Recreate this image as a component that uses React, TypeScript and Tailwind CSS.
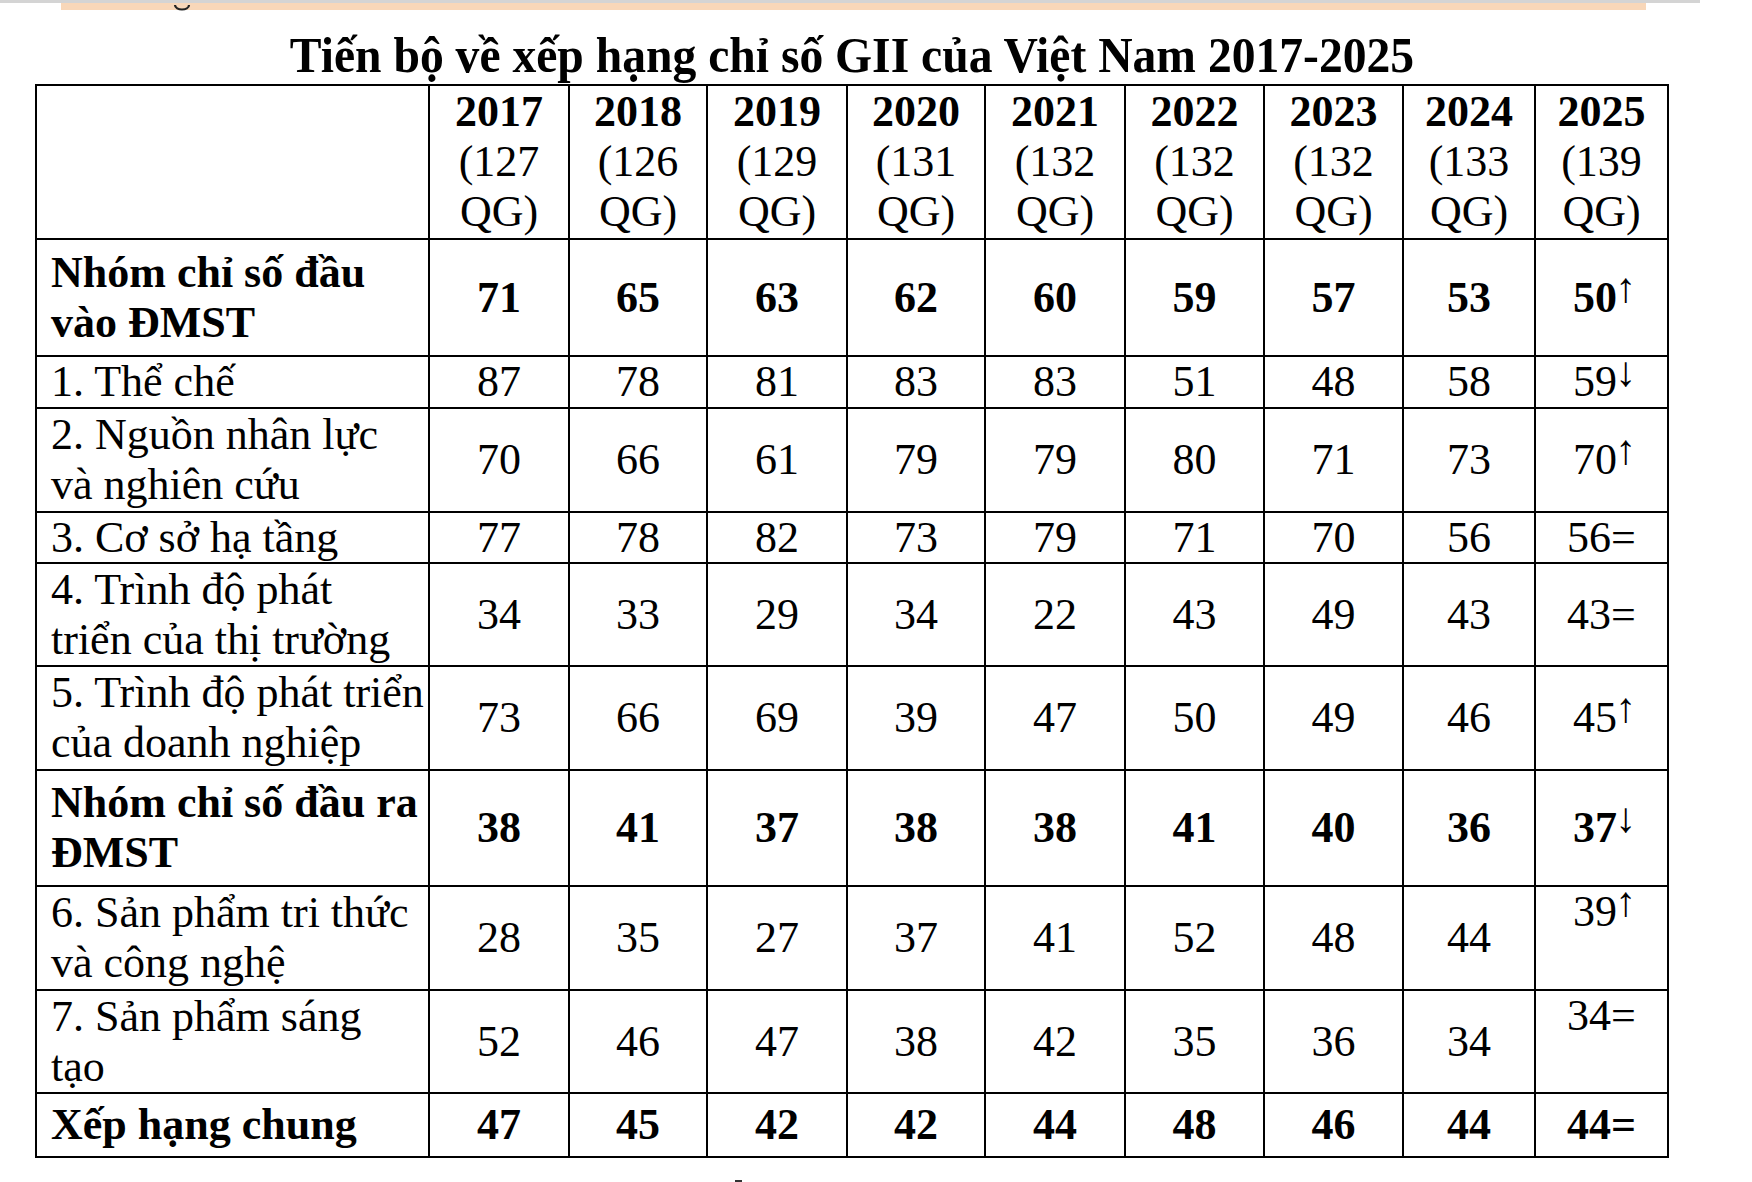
import React from "react";

type Cell = { v: string; mark?: "up" | "down" | "eq"; top?: boolean };
type Row = { label: string[]; bold?: boolean; cells: Cell[] };

const c = (s: string, top?: boolean): Cell => {
  if (s.endsWith("↑")) return { v: s.slice(0, -1), mark: "up", top };
  if (s.endsWith("↓")) return { v: s.slice(0, -1), mark: "down", top };
  if (s.endsWith("=")) return { v: s.slice(0, -1), mark: "eq", top };
  return { v: s, top };
};

const years = [
  ["2017", "(127"],
  ["2018", "(126"],
  ["2019", "(129"],
  ["2020", "(131"],
  ["2021", "(132"],
  ["2022", "(132"],
  ["2023", "(132"],
  ["2024", "(133"],
  ["2025", "(139"],
];

const rows: Row[] = [
  { label: ["Nhóm chỉ số đầu", "vào ĐMST"], bold: true, cells: ["71", "65", "63", "62", "60", "59", "57", "53", "50↑"].map((s) => c(s)) },
  { label: ["1. Thể chế"], cells: ["87", "78", "81", "83", "83", "51", "48", "58", "59↓"].map((s) => c(s)) },
  { label: ["2. Nguồn nhân lực", "và nghiên cứu"], cells: ["70", "66", "61", "79", "79", "80", "71", "73", "70↑"].map((s) => c(s)) },
  { label: ["3. Cơ sở hạ tầng"], cells: ["77", "78", "82", "73", "79", "71", "70", "56", "56="].map((s) => c(s)) },
  { label: ["4. Trình độ phát", "triển của thị trường"], cells: ["34", "33", "29", "34", "22", "43", "49", "43", "43="].map((s) => c(s)) },
  { label: ["5. Trình độ phát triển", "của doanh nghiệp"], cells: ["73", "66", "69", "39", "47", "50", "49", "46", "45↑"].map((s) => c(s)) },
  { label: ["Nhóm chỉ số đầu ra", "ĐMST"], bold: true, cells: ["38", "41", "37", "38", "38", "41", "40", "36", "37↓"].map((s) => c(s)) },
  { label: ["6. Sản phẩm tri thức", "và công nghệ"], cells: [...["28", "35", "27", "37", "41", "52", "48", "44"].map((s) => c(s)), c("39↑", true)] },
  { label: ["7. Sản phẩm sáng", "tạo"], cells: [...["52", "46", "47", "38", "42", "35", "36", "34"].map((s) => c(s)), c("34=", true)] },
  { label: ["Xếp hạng chung"], bold: true, cells: ["47", "45", "42", "42", "44", "48", "46", "44", "44="].map((s) => c(s)) },
];

function NumCell({ cell, bold }: { cell: Cell; bold?: boolean }) {
  return (
    <div
      className={`flex justify-center ${cell.top ? "items-start" : "items-center"} border-b-2 border-r-2 border-black ${bold ? "font-bold" : "font-normal"}`}
    >
      <span className="whitespace-nowrap leading-[50px]">
        {cell.v}
        {cell.mark === "up" && (
          <span className="relative -top-[10px] -ml-[2px] -mr-[6px] align-baseline text-[42px] font-normal leading-none">↑</span>
        )}
        {cell.mark === "down" && (
          <span className="relative -top-[10px] -ml-[2px] -mr-[6px] align-baseline text-[42px] font-normal leading-none">↓</span>
        )}
        {cell.mark === "eq" && <span>=</span>}
      </span>
    </div>
  );
}

export default function App() {
  return (
    <div
      className="relative w-[1752px] h-[1182px] overflow-hidden bg-white text-black"
      style={{ fontFamily: '"Liberation Serif", "Times New Roman", serif' }}
    >
      <div className="h-[3px] w-[1700px] bg-[#d4d4d4]" />
      <div className="ml-[61px] h-[7px] w-[1585px] bg-[#f8d7b9]" />
      <svg className="absolute left-[172px] top-[2px]" width="20" height="12" viewBox="0 0 20 12">
        <path d="M3 3 C3 9, 17 9, 17 3" fill="none" stroke="#222" strokeWidth="2.2" />
      </svg>

      <div className="ml-[35px] w-[1634px]">
        <div className="mt-[24px] h-[47px] origin-bottom scale-y-[1.08] text-center text-[47.6px] font-bold leading-[47px] whitespace-nowrap">
          Tiến bộ về xếp hạng chỉ số GII của Việt Nam 2017-2025
        </div>

        <div className="mt-[3px] grid grid-cols-[393px_140px_138px_140px_138px_140px_139px_139px_132px_133px] grid-rows-[154px_117px_52px_104px_51px_103px_104px_116px_104px_103px_64px] border-l-2 border-t-2 border-black text-[44px]">
          <div className="border-b-2 border-r-2 border-black" />
          {years.map(([y, n]) => (
            <div key={y} className="flex flex-col items-center justify-center border-b-2 border-r-2 border-black leading-[50px]">
              <span className="font-bold">{y}</span>
              <span>{n}</span>
              <span>QG)</span>
            </div>
          ))}
          {rows.map((r, i) => (
            <React.Fragment key={i}>
              <div
                className={`flex flex-col justify-center border-b-2 border-r-2 border-black pl-[14px] leading-[50px] whitespace-nowrap ${r.bold ? "font-bold" : ""}`}
              >
                {r.label.map((l) => (
                  <span key={l}>{l}</span>
                ))}
              </div>
              {r.cells.map((cell, j) => (
                <NumCell key={j} cell={cell} bold={r.bold} />
              ))}
            </React.Fragment>
          ))}
        </div>
        <div className="ml-[700px] mt-[22px] h-[4px] w-[7px] bg-[#333]" />
      </div>
    </div>
  );
}
